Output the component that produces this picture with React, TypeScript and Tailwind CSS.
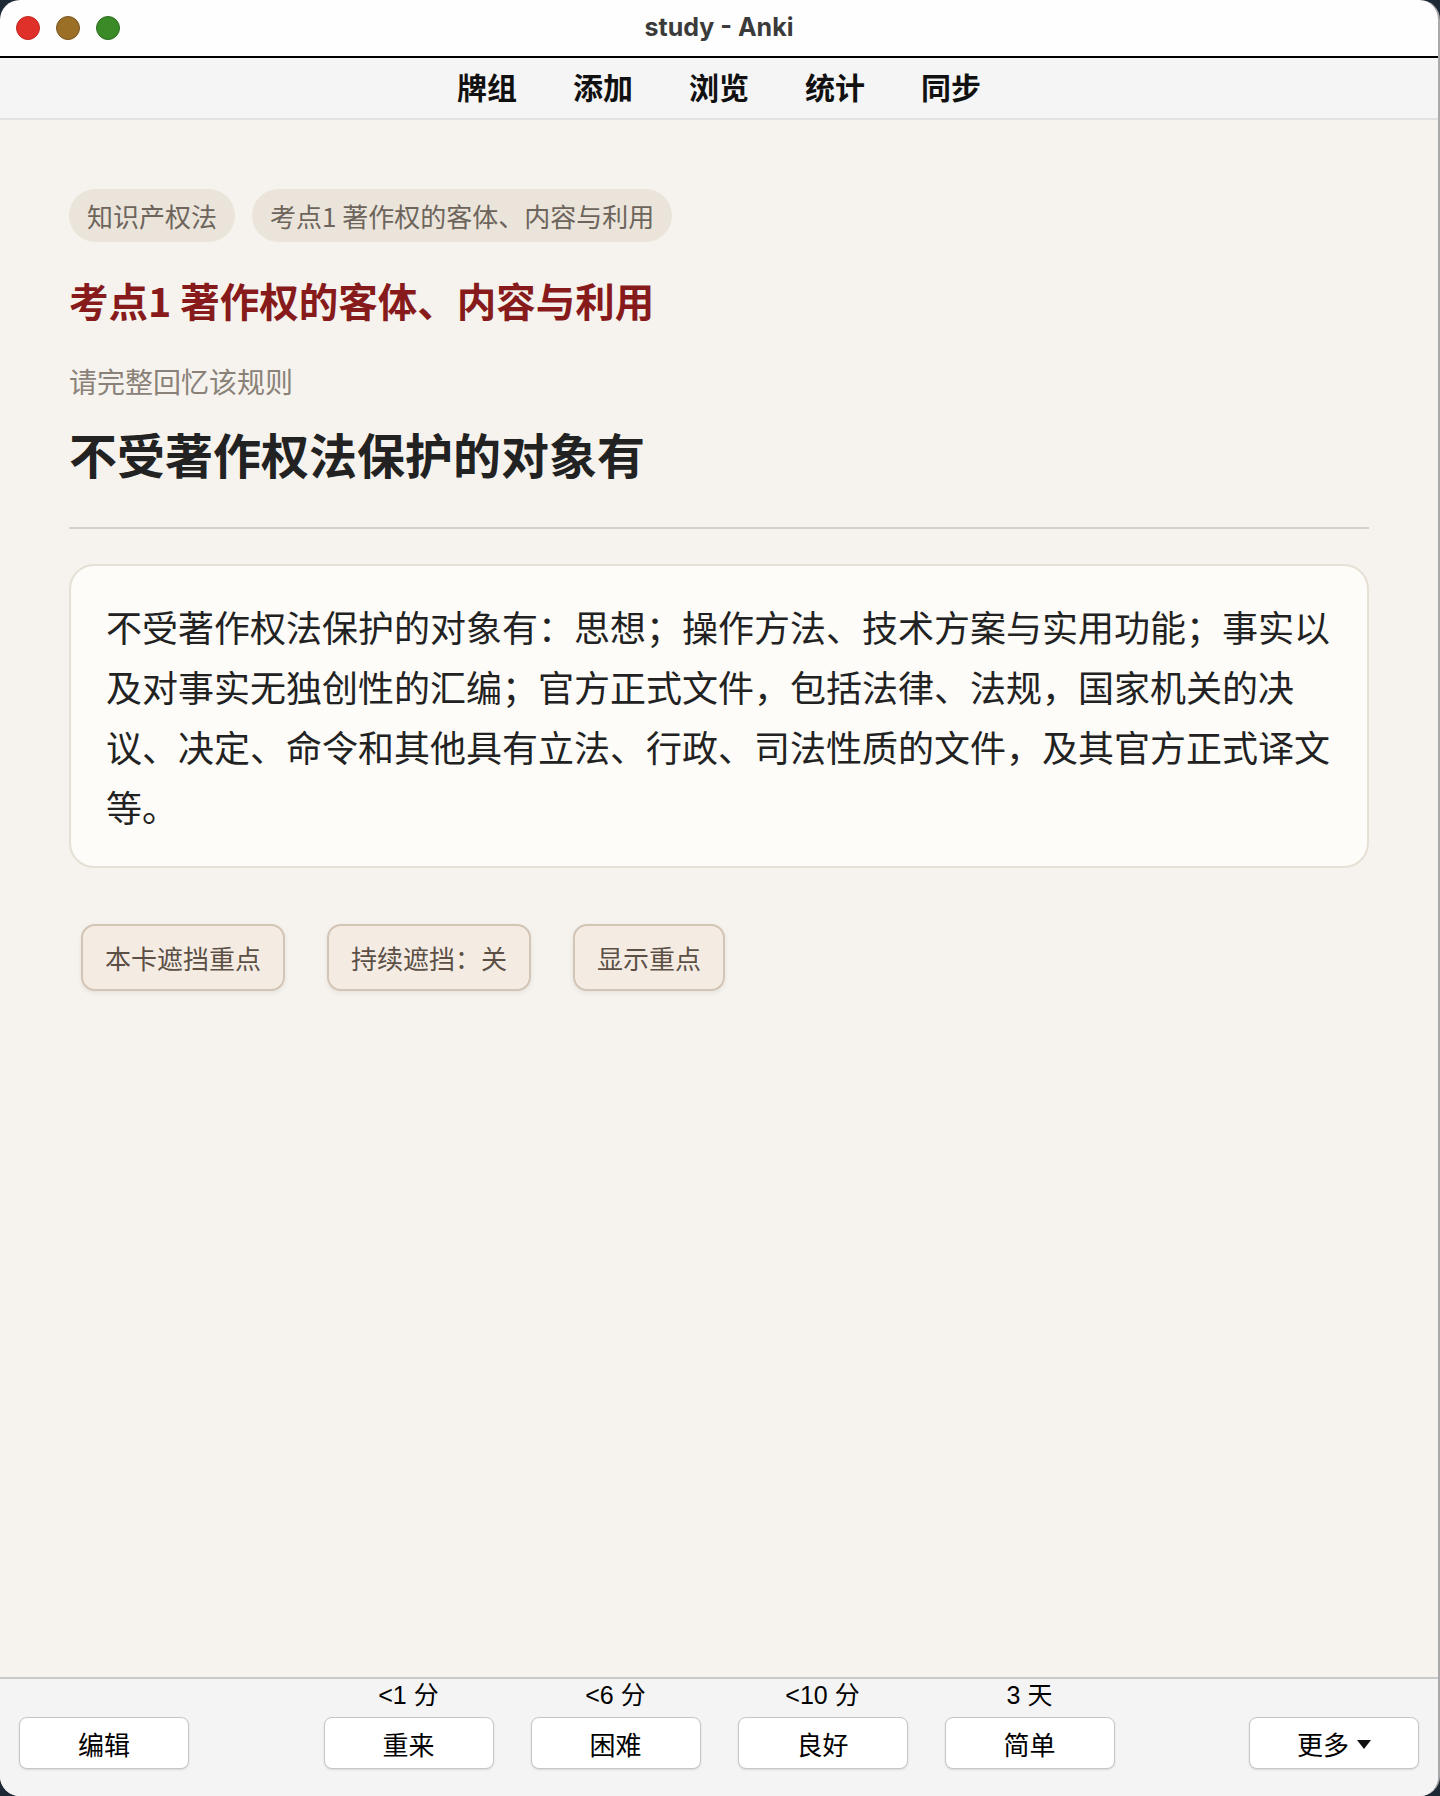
import React from "react";

const cjk = { fontFamily: '"Noto Sans CJK SC", "Noto Sans", sans-serif' };
const ui = { fontFamily: '"Liberation Sans", "Noto Sans CJK SC", sans-serif' };

const navItems = ["牌组", "添加", "浏览", "统计", "同步"];
const tags = ["知识产权法", "考点1 著作权的客体、内容与利用"];
const maskButtons = ["本卡遮挡重点", "持续遮挡：关", "显示重点"];
const ratings = [
  { label: "<1 分", text: "重来" },
  { label: "<6 分", text: "困难" },
  { label: "<10 分", text: "良好" },
  { label: "3 天", text: "简单" },
];

function BarButton({ children }: { children: React.ReactNode }) {
  return (
    <button
      type="button"
      className="flex h-[52px] w-[170px] items-center justify-center gap-2 rounded-[8px] border-[1.5px] border-[#c6c6c6] bg-white text-[26px] text-black shadow-[0_1px_2px_rgba(0,0,0,0.12)]"
      style={cjk}
    >
      {children}
    </button>
  );
}

export default function App() {
  return (
    <div className="h-[1796px] w-[1440px] bg-[#1d2a36]">
      <div className="flex h-full w-full flex-col overflow-hidden rounded-[20px] border-r-2 border-[#a9a9a9] bg-[#fefefe]">
        {/* title bar */}
        <div className="relative flex h-[56px] shrink-0 items-center justify-center">
          <div className="absolute left-[16px] top-[16px] flex gap-[16px]">
            <span className="h-[24px] w-[24px] rounded-full border border-[#c2271f] bg-[#e0302a]" />
            <span className="h-[24px] w-[24px] rounded-full border border-[#7a5420] bg-[#9b7026]" />
            <span className="h-[24px] w-[24px] rounded-full border border-[#2c6c1f] bg-[#3a8a28]" />
          </div>
          <span className="text-[25px] font-bold text-[#3b3b3b]" style={{ fontFamily: 'Inter, "Liberation Sans", sans-serif' }}>
            study - Anki
          </span>
        </div>
        <div className="h-[2px] shrink-0 bg-black" />

        {/* toolbar */}
        <div className="flex h-[62px] shrink-0 items-center justify-center gap-[56px] border-b-2 border-[#e2e2e2] bg-[#f5f5f5] pb-[4px]">
          {navItems.map((n) => (
            <span key={n} className="text-[30px] font-bold text-[#111]" style={cjk}>
              {n}
            </span>
          ))}
        </div>

        {/* card content */}
        <div className="flex-1 bg-[#f6f3ee] px-[69px] pt-[69px]" style={cjk}>
          <div className="flex gap-[17px]">
            {tags.map((t) => (
              <span key={t} className="flex h-[53px] items-center rounded-full bg-[#ebe4da] px-[18px] text-[26px] text-[#6d655c]">
                {t}
              </span>
            ))}
          </div>

          <h1 className="mt-[34px] text-[39.5px] font-bold leading-[48px] text-[#871b1c]">考点1 著作权的客体、内容与利用</h1>

          <div className="mt-[40px] text-[28px] leading-[35px] text-[#8a8178]">请完整回忆该规则</div>

          <h2 className="mt-[25px] text-[48px] font-bold leading-[58px] text-[#222]">不受著作权法保护的对象有</h2>

          <div className="mt-[45px] h-[2px] bg-[#d9d1c7]" />

          <div className="mt-[35px] rounded-[25px] border-2 border-[#e6dfd4] bg-[#fdfcf8] px-[35px] py-[30px] text-[36px] leading-[60px] text-[#222]">
            不受著作权法保护的对象有：思想；操作方法、技术方案与实用功能；事实以及对事实无独创性的汇编；官方正式文件，包括法律、法规，国家机关的决议、决定、命令和其他具有立法、行政、司法性质的文件，及其官方正式译文等。
          </div>

          <div className="ml-[12px] mt-[56px] flex gap-[42px]">
            {maskButtons.map((b) => (
              <button
                key={b}
                type="button"
                className="flex h-[67px] items-center rounded-[14px] border-2 border-[#d3c5b6] bg-[#f4ece3] px-[22px] text-[26px] text-[#5c5046] shadow-[0_2px_5px_rgba(0,0,0,0.07)]"
              >
                {b}
              </button>
            ))}
          </div>
        </div>

        {/* answer bar */}
        <div className="grid h-[119px] shrink-0 grid-cols-[1fr_auto_1fr] items-end border-t-2 border-[#c9c9c9] bg-[#f4f4f4] px-[19px] pb-[27px]">
          <div className="flex justify-start">
            <BarButton>编辑</BarButton>
          </div>
          <div className="flex gap-[37px]">
            {ratings.map((r) => (
              <div key={r.text} className="flex flex-col items-center gap-[8px]">
                <span className="text-[25px] leading-[28px] text-black" style={ui}>
                  {r.label}
                </span>
                <BarButton>{r.text}</BarButton>
              </div>
            ))}
          </div>
          <div className="flex justify-end">
            <BarButton>
              <span>更多</span>
              <svg width="14" height="9" viewBox="0 0 14 9" className="mt-[2px]">
                <path d="M0 0 L14 0 L7 9 Z" fill="#111" />
              </svg>
            </BarButton>
          </div>
        </div>
      </div>
    </div>
  );
}
